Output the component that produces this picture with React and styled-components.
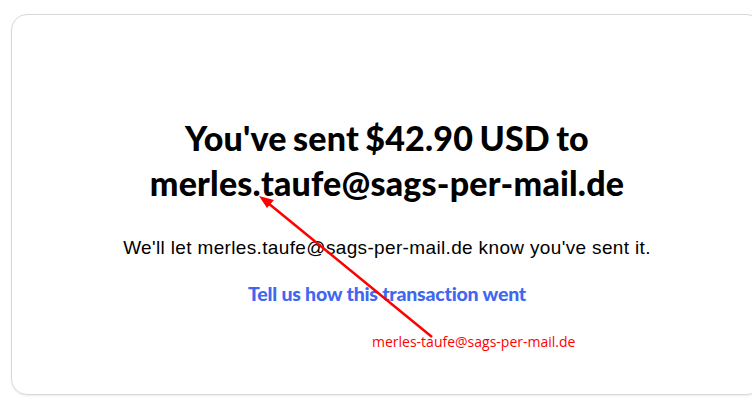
import React from "react"
import styled, { createGlobalStyle } from "styled-components"

const GlobalStyle = createGlobalStyle`
  html, body {
    margin: 0;
    padding: 0;
    background: #ffffff;
    overflow: hidden;
  }
  body {
    font-family: "Liberation Sans", Arial, sans-serif;
  }
`

const Page = styled.div`
  position: relative;
  width: 752px;
  height: 416px;
  padding: 14px 0 0 11px;
  box-sizing: border-box;
`

const Card = styled.div`
  width: 752px;
  height: 381px;
  box-sizing: border-box;
  border: 1px solid #d8d8d8;
  border-radius: 16px;
  box-shadow: 0 1px 2px rgba(0, 0, 0, 0.08);
  display: flex;
  flex-direction: column;
  align-items: center;
  padding: 100px 0 0 0;
`

const Heading = styled.h1`
  margin: 0;
  width: 520px;
  text-align: center;
  font-family: Lato, "Open Sans", sans-serif;
  font-weight: 900;
  font-size: 34px;
  line-height: 45px;
  letter-spacing: 0.2px;
  word-spacing: -2px;
  color: #000000;
`

const Message = styled.p`
  margin: 31px 0 0 0;
  font-family: "Liberation Sans", Arial, sans-serif;
  font-size: 19px;
  line-height: 24px;
  letter-spacing: 0.35px;
  color: #000000;
`

const FeedbackLink = styled.a`
  margin-top: 22px;
  font-family: Lato, "Open Sans", sans-serif;
  font-weight: 900;
  font-size: 19.5px;
  line-height: 24px;
  letter-spacing: -0.2px;
  color: #4067f0;
  text-decoration: none;
`

const Annotation = styled.svg`
  position: absolute;
  left: 0;
  top: 0;
  pointer-events: none;
`

const AnnotationLabel = styled.span`
  position: absolute;
  left: 372px;
  top: 332px;
  font-family: "Open Sans", "Liberation Sans", sans-serif;
  font-size: 14px;
  color: #ff0000;
`

export default function App() {
  return (
    <Page>
      <GlobalStyle />
      <Card>
        <Heading>You've sent $42.90 USD to merles.taufe@sags-per-mail.de</Heading>
        <Message>We'll let merles.taufe@sags-per-mail.de know you've sent it.</Message>
        <FeedbackLink href="#">Tell us how this transaction went</FeedbackLink>
      </Card>
      <Annotation width="752" height="416" viewBox="0 0 752 416">
        <line x1="432" y1="337" x2="268" y2="203" stroke="#ff0000" strokeWidth="2.5" />
        <polygon points="259,196 274,200 267,208" fill="#ff0000" />
      </Annotation>
      <AnnotationLabel>merles-taufe@sags-per-mail.de</AnnotationLabel>
    </Page>
  )
}
